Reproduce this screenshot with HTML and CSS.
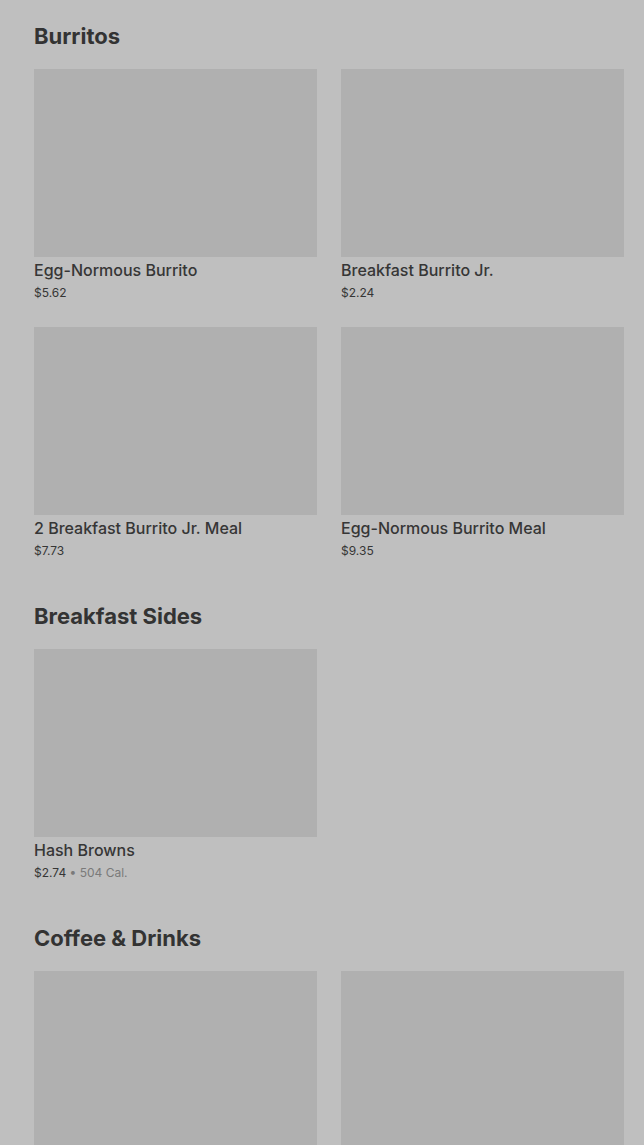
FILE: index.html
```html
<!DOCTYPE html>
<html lang="en">
<head>
<meta charset="utf-8">
<title>Menu</title>
<link rel="stylesheet" href="styles.css">
</head>
<body>
<main class="menu">
  <section class="section">
    <h2 class="section-title">Burritos</h2>
    <div class="grid">
      <div class="item"><div class="thumb"></div><div class="name">Egg-Normous Burrito</div><div class="meta"><span class="price">$5.62</span></div></div>
      <div class="item"><div class="thumb"></div><div class="name">Breakfast Burrito Jr.</div><div class="meta"><span class="price">$2.24</span></div></div>
      <div class="item"><div class="thumb"></div><div class="name">2 Breakfast Burrito Jr. Meal</div><div class="meta"><span class="price">$7.73</span></div></div>
      <div class="item"><div class="thumb"></div><div class="name">Egg-Normous Burrito Meal</div><div class="meta"><span class="price">$9.35</span></div></div>
    </div>
  </section>
  <section class="section">
    <h2 class="section-title">Breakfast Sides</h2>
    <div class="grid">
      <div class="item"><div class="thumb"></div><div class="name">Hash Browns</div><div class="meta"><span class="price">$2.74</span><span class="cal"> • 504 Cal.</span></div></div>
    </div>
  </section>
  <section class="section">
    <h2 class="section-title">Coffee &amp; Drinks</h2>
    <div class="grid">
      <div class="item"><div class="thumb"></div></div>
      <div class="item"><div class="thumb"></div></div>
    </div>
  </section>
</main>
</body>
</html>
```

FILE: styles.css
```css
html, body {
  margin: 0;
  padding: 0;
  background: #bfbfbf;
}
body {
  font-family: Inter, "Noto Sans", "Liberation Sans", sans-serif;
  color: #333333;
  overflow: hidden;
}
.menu {
  padding: 22px 20px 0 34px;
  display: flex;
  flex-direction: column;
  gap: 41px;
}
.section-title {
  margin: 0 0 19px 0;
  font-size: 22px;
  line-height: 28px;
  font-weight: 700;
  letter-spacing: 0;
  color: #333333;
}
.grid {
  display: grid;
  grid-template-columns: 283px 283px;
  column-gap: 24px;
  row-gap: 24px;
}
.thumb {
  height: 188px;
  background: #b0b0b0;
}
.name {
  margin-top: 3px;
  font-size: 16px;
  line-height: 20px;
  font-weight: 500;
  color: #363636;
}
.meta {
  margin-top: 3px;
  font-size: 12px;
  line-height: 20px;
  color: #363636;
}
.cal {
  color: #7a7a7a;
}
```
